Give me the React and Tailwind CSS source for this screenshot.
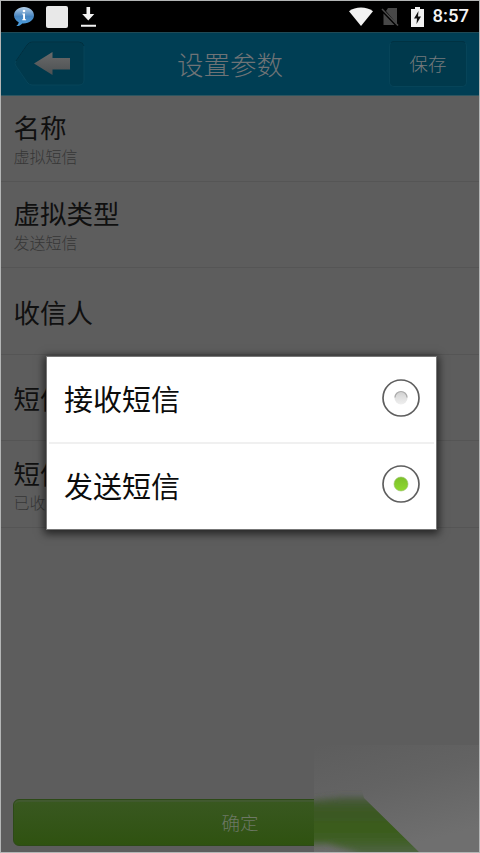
import React from 'react'

const settings = [
  { id: 1, title: '名称', summary: '虚拟短信' },
  { id: 2, title: '虚拟类型', summary: '发送短信' },
  { id: 3, title: '收信人' },
  { id: 4, title: '短信' },
  { id: 5, title: '短信', summary: '已收' },
]

const options = [
  { id: 'receive', label: '接收短信' },
  { id: 'send', label: '发送短信' },
]

const StatusBar = () => (
  <div className="flex h-[31px] shrink-0 items-center justify-between bg-black pr-[10px] pl-[12px]">
    <div className="flex items-center">
      <svg width="22" height="22" viewBox="0 0 22 22">
        <defs>
          <linearGradient id="bubble" x1="0" y1="0" x2="0" y2="1">
            <stop offset="0" stopColor="#b4cfe8" />
            <stop offset="0.5" stopColor="#4785c0" />
            <stop offset="1" stopColor="#4aa0e0" />
          </linearGradient>
        </defs>
        <path d="M11 1C5.400 1 1 4.800 1 9.300c0 3 1.900 5.500 4.700 6.900-.3 1.700-1.100 2.900-2.400 3.800 2.600 0 4.600-.9 6-2.600 6.600.5 11.700-3.300 11.700-8.100C21 4.800 16.600 1 11 1z" fill="url(#bubble)" />
        <circle cx="11" cy="5" r="1.300" fill="#fff" />
        <path d="M9.300 7.500h2.700v5.700h1.100v1H9.200v-1h.9V8.500h-.8z" fill="#fff" />
      </svg>
      <div className="ml-[11px] h-[22px] w-[22px] rounded-[2px] bg-[#e8e8e8]" />
      <svg className="ml-[12px]" width="17" height="22" viewBox="0 0 17 22">
        <path d="M6.500 1h3.600v7h4.200L8.300 14.500 2.200 8h4.300zM1 18.700h15v2H1z" fill="#f2f2f2" />
      </svg>
    </div>
    <div className="flex items-center">
      <svg width="24" height="20" viewBox="0 0 24 20">
        <path d="M0 4.200C3.300 1.600 7.500.4 12 .4s8.700 1.200 12 3.800L12 19z" fill="#f2f2f2" />
      </svg>
      <svg className="ml-[8px]" width="18" height="20" viewBox="0 0 18 20">
        <path d="M7 1h9v16L5 4zM2.500 6.500L13.500 18h-11z" fill="#484848" />
        <path d="M1 2L17 18.500" stroke="#4c4c4c" strokeWidth="1.500" />
      </svg>
      <svg className="ml-[12px]" width="13" height="20" viewBox="0 0 13 20">
        <path d="M4 0h5v2h4v18H0V2h4z" fill="#f2f2f2" />
        <path d="M7.500 4L3 11.500h3L5.500 17 10 9.500H7z" fill="#111" />
      </svg>
      <span className="ml-[9px] font-[Roboto,sans-serif] text-[18.500px] leading-none font-medium text-[#f4f4f4]">8:57</span>
    </div>
  </div>
)

const Header = () => (
  <div className="flex h-16 shrink-0 items-center justify-between border-t border-b border-t-[#1f4a56] border-b-[#2c5560] bg-[#003e54] pr-[12px] pl-[12px]">
    <svg width="72" height="48" viewBox="0 0 72 48">
      <defs>
        <linearGradient id="arrow" x1="0" y1="0" x2="0" y2="1">
          <stop offset="0" stopColor="#6a6a6a" />
          <stop offset="1" stopColor="#4c5052" />
        </linearGradient>
      </defs>
      <path d="M19 2h47q5 0 5 5v33q0 5-5 5H19q-3 0-5-3L3 26q-2-2.500 0-5L14 5q2-3 5-3z" fill="#00394c" stroke="#064459" />
      <path d="M3 21L14 5q2-3 5-3h47q4 0 5 4" fill="none" stroke="#002f3f" />
      <path d="M21 23.500L39.500 12v6H57v11.500H39.500V35z" fill="url(#arrow)" />
    </svg>
    <h1 className="mr-[14px] text-[26.500px] leading-none font-light text-[#6f7376]">设置参数</h1>
    <button className="flex h-[46px] w-[78px] items-center justify-center rounded-[5px] border border-[#064459] border-t-[#003242] bg-[#00394c] text-[18.500px] font-light text-[#777b7d]">
      保存
    </button>
  </div>
)

const SettingRow = ({ title, summary }) => (
  <div className="flex h-[86.500px] flex-col justify-center border-b border-[#555] pt-[2px] pl-[12.500px]">
    <span className="text-[26.500px] leading-[34px] text-[#101010]">{title}</span>
    {summary && <span className="text-[16px] leading-[24px] font-light text-[#363636]">{summary}</span>}
  </div>
)

const Radio = ({ checked }) => (
  <svg className="-mt-[2px]" width="38" height="38" viewBox="0 0 38 38">
    <defs>
      <linearGradient id="dot-on" x1="0" y1="0" x2="0" y2="1">
        <stop offset="0" stopColor="#7cc02a" />
        <stop offset="1" stopColor="#8fd92f" />
      </linearGradient>
      <linearGradient id="dot-off" x1="0" y1="0" x2="0" y2="1">
        <stop offset="0" stopColor="#cfcfcf" />
        <stop offset="0.4" stopColor="#dedede" />
        <stop offset="1" stopColor="#efefef" />
      </linearGradient>
    </defs>
    <circle cx="19" cy="19" r="18" fill="#fff" stroke="#5e5e5e" strokeWidth="1.700" />
    {checked ? (
      <circle cx="19" cy="19" r="7" fill="url(#dot-on)" stroke="#9bbf6b" strokeWidth="0.600" />
    ) : (
      <>
        <circle cx="19" cy="19" r="6.500" fill="url(#dot-off)" />
        <path d="M13 18.500a6 6 0 0 1 12 0" fill="none" stroke="#aaa" strokeWidth="1.200" />
      </>
    )}
  </svg>
)

const OptionDialog = ({ selected }) => (
  <div className="absolute top-[356px] left-[46px] flex h-[174px] w-[391px] flex-col border border-[#777] bg-white pb-px shadow-[0_2px_8px_2px_rgba(0,0,0,0.6)]">
    {options.map((option, index) => (
      <React.Fragment key={option.id}>
        {index > 0 && <div className="mx-[2px] h-[2px] shrink-0 bg-[#f0f0f0]" />}
        <div className="flex flex-1 items-center justify-between pr-[16px] pb-px pl-[17px]">
          <span className="text-[29px] leading-none text-[#0c0c0c]">{option.label}</span>
          <Radio checked={option.id === selected} />
        </div>
      </React.Fragment>
    ))}
  </div>
)

// light corner that folds over the end of the confirm button
const CornerFold = () => (
  <svg className="absolute right-0 bottom-0" width="166" height="108" viewBox="0 0 166 108">
    <defs>
      <linearGradient id="fold" x1="0" y1="0" x2="0.4" y2="1">
        <stop offset="0" stopColor="#5d5d5d" />
        <stop offset="0.45" stopColor="#636363" />
        <stop offset="1" stopColor="#6f6f6f" />
      </linearGradient>
      <linearGradient id="fold-green" gradientUnits="userSpaceOnUse" x1="0" y1="48" x2="0" y2="110">
        <stop offset="0" stopColor="#4f5a49" />
        <stop offset="0.25" stopColor="#3c5825" />
        <stop offset="0.6" stopColor="#3a5c1c" />
        <stop offset="0.8" stopColor="#425f2a" />
        <stop offset="1" stopColor="#52664a" />
      </linearGradient>
      <filter id="soften" x="-15%" y="-20%" width="130%" height="140%">
        <feGaussianBlur stdDeviation="3" />
      </filter>
      <clipPath id="fold-edge">
        <path d="M0 0H36L50 53L106 108H0z" />
      </clipPath>
    </defs>
    <path d="M0 0H166V108H0z" fill="url(#fold)" />
    <g clipPath="url(#fold-edge)">
      <path d="M-14 57L28 52H70L140 122H60L38 106L14 99H-14z" fill="url(#fold-green)" filter="url(#soften)" />
    </g>
  </svg>
)

const App = () => (
  <div className="relative flex h-[853px] w-[480px] flex-col overflow-hidden border border-[#b4b6b6] bg-[#5d5d5d] font-['Noto_Sans_CJK_SC',sans-serif]">
    <StatusBar />
    <Header />
    <div className="-mt-px flex flex-1 flex-col">
      {settings.map((item) => (
        <SettingRow key={item.id} title={item.title} summary={item.summary} />
      ))}
    </div>
    <div className="px-[12px] pb-[6px]">
      <button className="flex h-[47px] w-full items-center justify-center rounded-[6px] border border-[#2d4a18] bg-linear-to-b from-[#395820] to-[#2f5210] text-[18.500px] font-light text-[#6d7866] shadow-[inset_0_2px_1px_#425a30]">
        确定
      </button>
    </div>
    <div className="absolute -right-px -bottom-px">
      <CornerFold />
    </div>
    <div className="absolute -top-px -left-px">
      <OptionDialog selected="send" />
    </div>
  </div>
)

export default App
